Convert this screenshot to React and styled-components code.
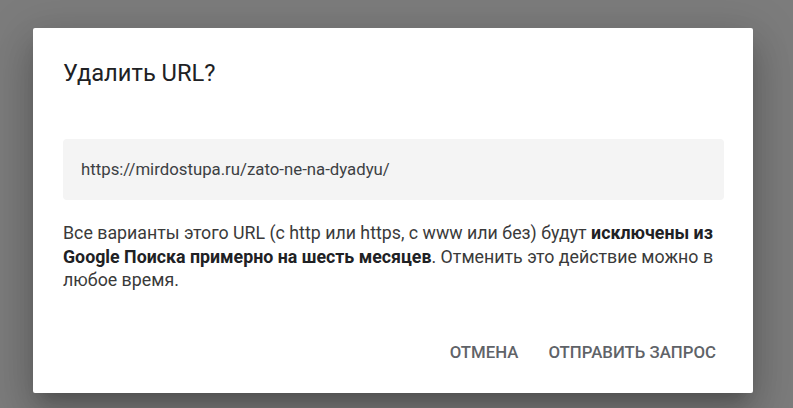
import React from "react";
import styled, { createGlobalStyle } from "styled-components";

const Global = createGlobalStyle`
  html, body { margin: 0; padding: 0; }
  body {
    background: #7c7c7c;
    font-family: Roboto, "Noto Sans", "Liberation Sans", sans-serif;
    width: 793px;
    height: 408px;
    overflow: hidden;
  }
`;

const Backdrop = styled.div`
  box-sizing: border-box;
  width: 793px;
  height: 408px;
  padding: 28px 40px 15px 33px;
  display: flex;
  align-items: flex-start;
`;

const Dialog = styled.div`
  box-sizing: border-box;
  width: 720px;
  height: 365px;
  background: #ffffff;
  border-radius: 2px;
  box-shadow: 0 11px 15px -7px rgba(0,0,0,0.2), 0 24px 38px 3px rgba(0,0,0,0.14), 0 9px 46px 8px rgba(0,0,0,0.12);
  padding: 29px 29px 0 30px;
  display: flex;
  flex-direction: column;
`;

const Title = styled.h2`
  margin: 0;
  font-size: 23.7px;
  line-height: 32px;
  font-weight: 400;
  color: #202124;
`;

const UrlBox = styled.div`
  margin-top: 50px;
  background: #f4f4f4;
  border-radius: 4px;
  padding: 18px 18px;
  font-size: 16.8px;
  line-height: 25px;
  color: #3c4043;
`;

const Body = styled.p`
  margin: 21px 0 0;
  font-size: 17.8px;
  line-height: 23.5px;
  color: #3a3a3a;
  b { font-weight: 700; color: #202124; }
`;

const Actions = styled.div`
  margin-top: auto;
  margin-bottom: 23px;
  display: flex;
  justify-content: flex-end;
  gap: 14px;
`;

const TextButton = styled.button`
  border: none;
  background: transparent;
  font-family: inherit;
  font-size: 16.8px;
  font-weight: 500;
  text-transform: uppercase;
  color: #5f6368;
  height: 36px;
  padding: 0 8px;
  cursor: pointer;
`;

export default function App() {
  return (
    <>
      <Global />
      <Backdrop>
        <Dialog>
          <Title>Удалить URL?</Title>
          <UrlBox>https://mirdostupa.ru/zato-ne-na-dyadyu/</UrlBox>
          <Body>
            Все варианты этого URL (с http или https, с www или без) будут{" "}
            <b>исключены из Google Поиска примерно на шесть месяцев</b>. Отменить
            это действие можно в любое время.
          </Body>
          <Actions>
            <TextButton>Отмена</TextButton>
            <TextButton>Отправить запрос</TextButton>
          </Actions>
        </Dialog>
      </Backdrop>
    </>
  );
}
